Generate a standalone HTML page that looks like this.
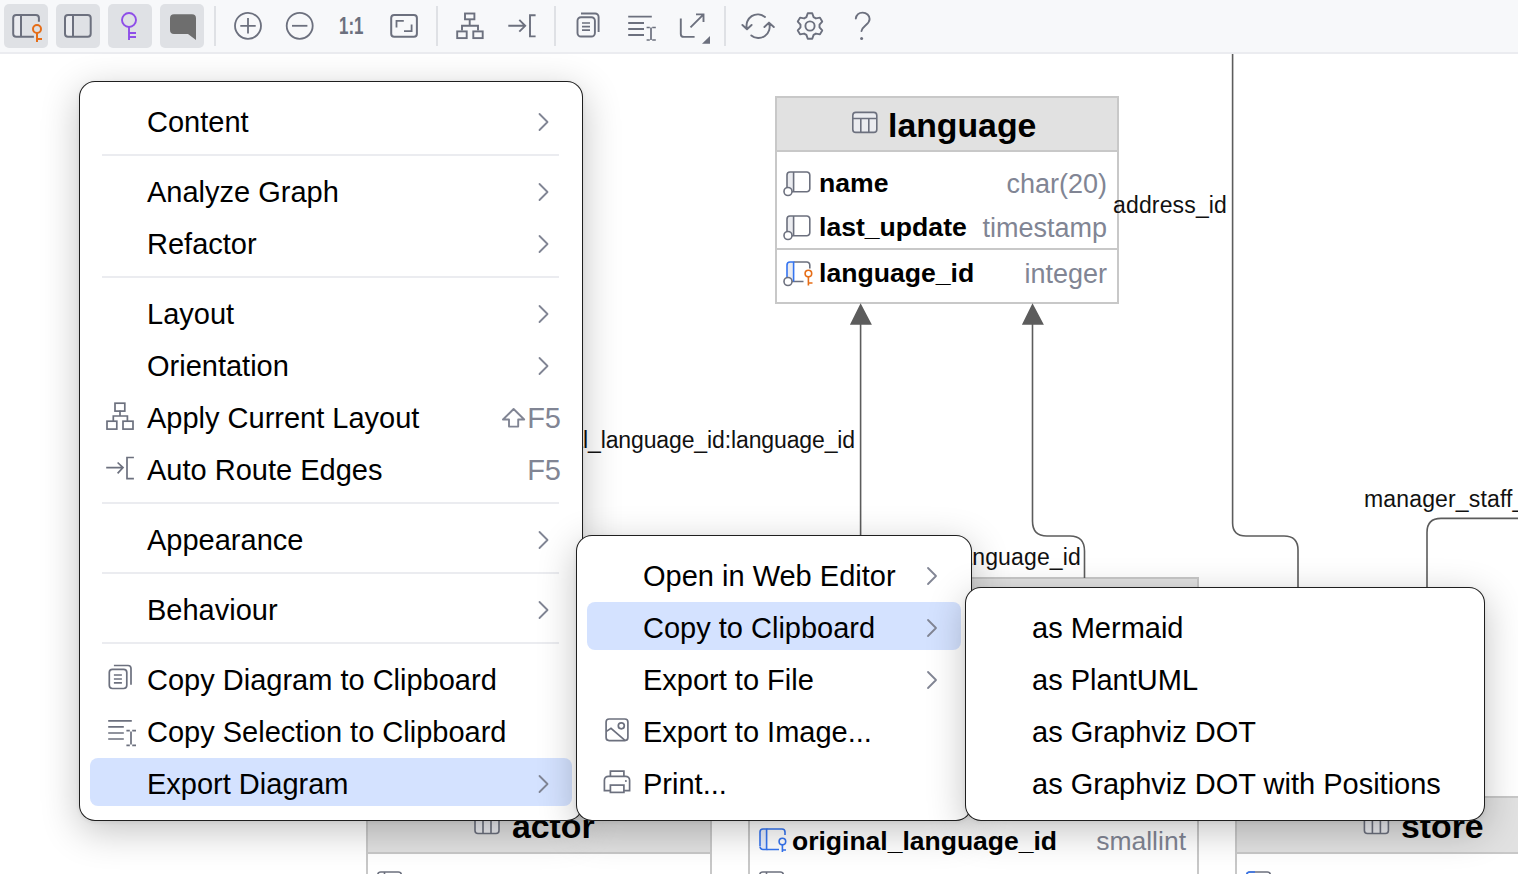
<!DOCTYPE html>
<html><head><meta charset="utf-8">
<style>
html,body{margin:0;padding:0;}
body{width:1518px;height:874px;overflow:hidden;position:relative;background:#fff;font-family:"Liberation Sans",sans-serif;}
.abs{position:absolute;}
#toolbar{position:absolute;left:0;top:0;width:1518px;height:52px;background:#f7f8fa;border-bottom:2px solid #ebecf0;}
svg{position:absolute;left:0;top:0;overflow:visible;}
.lbl{position:absolute;font-size:23px;letter-spacing:0.15px;line-height:0;color:#111;white-space:nowrap;}
.tb{position:absolute;background:#fff;border:2px solid #c8c8c8;box-sizing:border-box;}
.th{position:absolute;background:#e1e1e1;}
.bt{position:absolute;font-weight:bold;color:#000;white-space:nowrap;line-height:0;}
.ty{position:absolute;color:#818594;white-space:nowrap;line-height:0;font-size:27px;text-align:right;}
.menu{position:absolute;background:#fff;border:1px solid rgba(0,0,0,0.88);border-radius:16px;box-shadow:0 10px 38px rgba(0,0,0,0.24),0 1px 4px rgba(0,0,0,0.07);box-sizing:border-box;}
.mi{position:absolute;font-size:29px;line-height:0;color:#000;white-space:nowrap;}
.sc{position:absolute;font-size:29px;line-height:0;color:#818594;white-space:nowrap;}
.sep{position:absolute;height:2px;background:#ebecf0;}
.hl{position:absolute;background:#d4e2ff;border-radius:8px;}
</style></head>
<body>

<!-- ============ TOOLBAR ============ -->
<div id="toolbar"></div>
<svg width="1518" height="54" viewBox="0 0 1518 54" fill="none" stroke="#6c707e" stroke-width="2">
  <rect x="4" y="4" width="44" height="44" rx="5" fill="#dfe1e5" stroke="none"/>
  <rect x="56" y="4" width="44" height="44" rx="5" fill="#dfe1e5" stroke="none"/>
  <rect x="108" y="4" width="44" height="44" rx="5" fill="#dfe1e5" stroke="none"/>
  <rect x="160" y="4" width="44" height="44" rx="5" fill="#dfe1e5" stroke="none"/>
  <!-- icon1 -->
  <rect x="14" y="16" width="7" height="20" fill="#ebecf0" stroke="none"/>
  <path d="M38.9,21.7 V18.1 A3,3 0 0 0 35.9,15.1 H16.2 A3,3 0 0 0 13.2,18.1 V33.7 A3,3 0 0 0 16.2,36.7 H33.9 M21,15.1 V36.7"/>
  <g stroke="#e66d17"><circle cx="37" cy="29" r="4"/><path d="M37,33 V42 M37,39 H42"/></g>
  <!-- icon2 -->
  <rect x="66" y="16" width="7" height="20" fill="#ebecf0" stroke="none"/>
  <rect x="65" y="15.1" width="25.7" height="21.6" rx="3"/>
  <path d="M73,15.1 V36.7"/>
  <!-- icon3 key -->
  <g stroke="#8e4ee8" stroke-width="1.9"><circle cx="129" cy="20" r="7"/><path d="M129,27 V40 M129,33 H136 M129,37 H136"/></g>
  <!-- icon4 bubble -->
  <path d="M174,14.2 H192 A4,4 0 0 1 196,18.2 V40 L188,34 H174 A4,4 0 0 1 170,30 V18.2 A4,4 0 0 1 174,14.2 Z" fill="#6e6e6e" stroke="none"/>
  <!-- separators -->
  <g stroke="#dfe1e5" stroke-width="2"><path d="M215,6 V46 M437,6 V46 M555,6 V46 M725,6 V46"/></g>
  <g stroke-width="1.8">
  <!-- zoom in/out -->
  <circle cx="248" cy="25.8" r="13"/><path d="M240.3,25.8 H255.7 M248,18.1 V33.5"/>
  <circle cx="299.7" cy="25.8" r="13"/><path d="M292,25.8 H307.4"/>
  </g>
  <text x="339" y="34.3" font-family="Liberation Sans" font-weight="bold" font-size="24" fill="#6c707e" stroke="none" textLength="24.5" lengthAdjust="spacingAndGlyphs">1:1</text>
  <!-- fit -->
  <rect x="391.2" y="15.1" width="25.7" height="21.7" rx="3"/>
  <path d="M396.5,27.5 V20.8 H403.8 M411.6,24.6 V31.2 H404" stroke-width="1.8"/>
  <!-- layout -->
  <g stroke-width="1.9">
  <rect x="465" y="13.5" width="9.4" height="5.8"/>
  <rect x="457.2" y="31.4" width="9.5" height="6.7"/>
  <rect x="473.3" y="31.4" width="9.4" height="6.7"/>
  <path d="M469.7,19.4 V25.8 M462,30.4 V25.8 H478 V30.4"/>
  <!-- route -->
  <path d="M508.3,25.8 H524.6 M519.3,19.9 L525.2,25.8 L519.3,31.7 M535.6,15.3 H530 V36.4 H535.6"/>
  </g>
  <!-- copy -->
  <g stroke-width="1.9">
  <rect x="577.5" y="17.2" width="17.4" height="19.3" rx="3.5"/>
  <path d="M581,13.5 H595.1 A3.5,3.5 0 0 1 598.6,17 V32"/>
  <path d="M582,23 H590 M582,26.6 H590 M582,30.2 H590" stroke-width="1.7"/>
  <!-- copy selection -->
  <path d="M628.2,16.6 H651.8 M628.2,23 H644 M628.2,29 H644 M628.2,35 H644" />
  <path d="M651,27.5 V40 M646.6,27.5 H649.8 M652.2,27.5 H655.8 M646.6,40 H649.8 M652.2,40 H655.8" stroke-width="1.7"/>
  <!-- export -->
  <path d="M680.8,18.5 V33.9 A3,3 0 0 0 683.8,36.9 H694.6 M690.5,27.3 L703.5,14.4 M696,14.4 H703.5 V22"/>
  </g>
  <path d="M702,43.7 H710 V36 Z" fill="#6c707e" stroke="none"/>
  <!-- refresh -->
  <g stroke-width="1.9" stroke-linecap="round" stroke-linejoin="round">
  <path d="M765,17 A11.2,11.2 0 0 0 747,28.7 M742.4,25 L747,29.3 L751.6,25"/>
  <path d="M751.3,35.4 A11.2,11.2 0 0 0 769,23 M764.4,27 L769,22.6 L773.8,27"/>
  <!-- gear -->
  <path d="M807.74,13.20L812.26,13.20L813.60,17.10L815.91,18.44L819.96,17.64L822.22,21.55L819.51,24.66L819.51,27.34L822.22,30.45L819.96,34.36L815.91,33.56L813.60,34.90L812.26,38.80L807.74,38.80L806.40,34.90L804.09,33.56L800.04,34.36L797.78,30.45L800.49,27.34L800.49,24.66L797.78,21.55L800.04,17.64L804.09,18.44L806.40,17.10Z"/>
  <circle cx="810" cy="26" r="4.6"/>
  <!-- help -->
  <path d="M855.8,18.5 C856.5,14.5 859.3,12.6 862.6,12.6 C866.6,12.6 869.6,15.5 869.6,19 C869.6,22.2 867.4,23.8 865.4,25.6 C863.3,27.4 861.8,28.6 861.5,31"/>
  </g>
  <circle cx="861.6" cy="38.4" r="1.5" fill="#6c707e" stroke="none"/>
</svg>

<!-- ============ DIAGRAM ============ -->
<!-- language table -->
<div class="tb" style="left:775px;top:96px;width:344px;height:208px;"></div>
<div class="th" style="left:777px;top:98px;width:340px;height:52px;"></div>
<div class="abs" style="left:777px;top:150px;width:340px;height:2px;background:#c8c8c8;"></div>
<div class="abs" style="left:777px;top:248px;width:340px;height:2px;background:#c8c8c8;"></div>
<div class="bt" style="left:888px;top:125px;font-size:33.8px;">language</div>
<div class="bt" style="left:819px;top:183px;font-size:26.6px;">name</div>
<div class="bt" style="left:819px;top:227px;font-size:26.6px;">last_update</div>
<div class="bt" style="left:819px;top:273px;font-size:26.6px;">language_id</div>
<div class="ty" style="right:411px;top:184px;">char(20)</div>
<div class="ty" style="right:411px;top:228px;">timestamp</div>
<div class="ty" style="right:411px;top:274px;">integer</div>

<!-- middle table -->
<div class="tb" style="left:748px;top:577px;width:451px;height:320px;"></div>
<div class="th" style="left:750px;top:579px;width:447px;height:52px;"></div>
<div class="bt" style="left:792px;top:841px;font-size:26.5px;">original_language_id</div>
<div class="ty" style="right:332px;top:841px;font-size:26.5px;">smallint</div>

<!-- actor table -->
<div class="tb" style="left:366px;top:796px;width:346px;height:120px;"></div>
<div class="th" style="left:368px;top:798px;width:342px;height:54px;"></div>
<div class="abs" style="left:368px;top:852px;width:342px;height:2px;background:#c8c8c8;"></div>
<div class="bt" style="left:512px;top:826px;font-size:33.8px;">actor</div>

<!-- store table -->
<div class="tb" style="left:1235px;top:796px;width:346px;height:120px;"></div>
<div class="th" style="left:1237px;top:798px;width:342px;height:54px;"></div>
<div class="abs" style="left:1237px;top:852px;width:342px;height:2px;background:#c8c8c8;"></div>
<div class="bt" style="left:1401px;top:826px;font-size:33.8px;">store</div>

<svg width="1518" height="874" viewBox="0 0 1518 874" fill="none" stroke="#6c707e" stroke-width="1.6">
  <!-- table icons -->
  <g>
    <rect x="852.8" y="112.4" width="24" height="20" rx="3" fill="#ebecf0"/>
    <path d="M852.8,118.5 H876.8 M860.8,118.5 V132.4 M868.8,118.5 V132.4"/>
    <rect x="475" y="813.5" width="24" height="20" rx="3" fill="#ebecf0"/>
    <path d="M475,819.5 H499 M483,819.5 V833.5 M491,819.5 V833.5"/>
    <rect x="1364.4" y="813.5" width="24" height="20" rx="3" fill="#ebecf0"/>
    <path d="M1364.4,819.5 H1388.4 M1372.4,819.5 V833.5 M1380.4,819.5 V833.5"/>
  </g>
  <!-- column icons -->
  <g>
    <rect x="787" y="172" width="6.6" height="19" fill="#ebecf0" stroke="none"/>
    <path d="M787,188 V175 A3,3 0 0 1 790,172 H806.8 A3,3 0 0 1 809.8,175 V188.8 A3,3 0 0 1 806.8,191.8 H792 M793.6,172 V191.8"/>
    <circle cx="788" cy="191.5" r="4" fill="#fff"/>
    <rect x="787" y="216" width="6.6" height="19" fill="#ebecf0" stroke="none"/>
    <path d="M787,232 V219 A3,3 0 0 1 790,216 H806.8 A3,3 0 0 1 809.8,219 V232.8 A3,3 0 0 1 806.8,235.8 H792 M793.6,216 V235.8"/>
    <circle cx="788" cy="235.5" r="4" fill="#fff"/>
    <rect x="787" y="262" width="6.6" height="19" fill="#ebecf0" stroke="none"/>
    <path d="M793.6,262 H806.8 A3,3 0 0 1 809.8,265 V268.5 M803.5,281.5 H792"/>
    <path d="M787,278 V265 A3,3 0 0 1 790,262 H793.6 V281.5" stroke="#3574f0"/>
    <circle cx="788" cy="281.5" r="4" fill="#fff"/>
    <g stroke="#e66d17"><circle cx="808.4" cy="273.6" r="3.3"/><path d="M808.4,277 V285.5 M808.4,283 H812.5"/></g>
    <!-- middle table row -->
    <rect x="760" y="829" width="6.6" height="20" fill="#e8eefc" stroke="none"/>
    <path d="M766.6,829 H782 A3,3 0 0 1 785,832 V835 M779,849.5 H766.6" stroke="#3574f0"/>
    <path d="M760,846 V832 A3,3 0 0 1 763,829 H766.6 V849.5 H763 A3,3 0 0 1 760,846.5" stroke="#3574f0"/>
    <g stroke="#3574f0"><circle cx="782.4" cy="841.6" r="3.3"/><path d="M782.4,845 V852 M782.4,850 H786"/></g>
    <!-- partial row icons at bottom -->
    <rect x="377.8" y="872" width="23.5" height="14" rx="3"/><path d="M384.5,872 V886"/>
    <rect x="759.8" y="872" width="23.5" height="14" rx="3"/><path d="M766.5,872 V886"/>
    <rect x="1246.8" y="872" width="23.5" height="14" rx="3"/>
    <path d="M1246.8,886 V875 A3,3 0 0 1 1249.8,872 H1255" stroke="#3574f0"/>
  </g>
  <!-- edges -->
  <g stroke="#5c5c5c" stroke-width="1.6">
    <path d="M860.6,324 V560"/>
    <path d="M1032.5,324 V521 Q1032.5,536 1047,536 H1070 Q1084.5,536 1084.5,551 V578"/>
    <path d="M1232.6,54 V523 Q1232.6,536 1246,536 H1284 Q1298,536 1298,550 V590"/>
    <path d="M1518,518.4 H1441 Q1427,518.4 1427,532.4 V590"/>
  </g>
  <path d="M860.6,303.3 L849.9,324.8 H871.9 Z M1032.5,303.3 L1021.9,324.8 H1043.9 Z" fill="#5c5c5c" stroke="none"/>
</svg>
<div class="lbl" style="left:1113px;top:205px;">address_id</div>
<div class="lbl" style="right:663px;top:440px;letter-spacing:-0.12px;">original_language_id:language_id</div>
<div class="lbl" style="right:437px;top:557px;">language_id</div>
<div class="lbl" style="left:1364px;top:499px;">manager_staff_id</div>

<!-- ============ MENU 1 ============ -->
<div class="menu" style="left:79px;top:81px;width:504px;height:740px;"></div>
<div class="hl" style="left:90px;top:758px;width:482px;height:48px;"></div>
<div class="sep" style="left:102px;top:154px;width:457px;"></div>
<div class="sep" style="left:102px;top:276px;width:457px;"></div>
<div class="sep" style="left:102px;top:502px;width:457px;"></div>
<div class="sep" style="left:102px;top:572px;width:457px;"></div>
<div class="sep" style="left:102px;top:642px;width:457px;"></div>
<div class="mi" style="left:147px;top:122px;">Content</div>
<div class="mi" style="left:147px;top:192px;">Analyze Graph</div>
<div class="mi" style="left:147px;top:244px;">Refactor</div>
<div class="mi" style="left:147px;top:314px;">Layout</div>
<div class="mi" style="left:147px;top:366px;">Orientation</div>
<div class="mi" style="left:147px;top:418px;">Apply Current Layout</div>
<div class="mi" style="left:147px;top:470px;">Auto Route Edges</div>
<div class="mi" style="left:147px;top:540px;">Appearance</div>
<div class="mi" style="left:147px;top:610px;">Behaviour</div>
<div class="mi" style="left:147px;top:680px;">Copy Diagram to Clipboard</div>
<div class="mi" style="left:147px;top:732px;">Copy Selection to Clipboard</div>
<div class="mi" style="left:147px;top:784px;">Export Diagram</div>
<div class="sc" style="right:957px;top:418px;">F5</div>
<div class="sc" style="right:957px;top:470px;">F5</div>
<svg width="1518" height="874" viewBox="0 0 1518 874" fill="none" stroke="#6c707e" stroke-width="1.7">
  <g stroke="#818594" stroke-width="1.8" stroke-linecap="round" stroke-linejoin="round">
    <path d="M539.5,114 L547.5,122 L539.5,130"/>
    <path d="M539.5,184 L547.5,192 L539.5,200"/>
    <path d="M539.5,236 L547.5,244 L539.5,252"/>
    <path d="M539.5,306 L547.5,314 L539.5,322"/>
    <path d="M539.5,358 L547.5,366 L539.5,374"/>
    <path d="M539.5,532 L547.5,540 L539.5,548"/>
    <path d="M539.5,602 L547.5,610 L539.5,618"/>
    <path d="M539.5,776 L547.5,784 L539.5,792"/>
    <!-- shift glyph -->
    <path d="M513.6,409 L503,419.5 H509 V426.6 H518.2 V419.5 H524.2 Z" stroke-width="1.9"/>
  </g>
  <!-- layout icon -->
  <rect x="115" y="403.2" width="9.8" height="7.9"/>
  <rect x="107" y="421.2" width="9.8" height="7.9"/>
  <rect x="123" y="421.2" width="10" height="7.9"/>
  <path d="M120,410.4 V416 M113.3,421.2 V416 H127.4 V421.2"/>
  <!-- route icon -->
  <path d="M106.2,467.6 H123 M117.6,462.5 L123,467.6 L117.6,473.3 M133.9,457.5 H127 V478.6 H133.9"/>
  <!-- copy icon -->
  <rect x="109.3" y="669.3" width="17.5" height="19.2" rx="3.2"/>
  <path d="M113.9,665.5 H128 A3,3 0 0 1 131,668.5 V684.7"/>
  <path d="M113.9,675 H121.9 M113.9,679 H121.9 M113.9,682.8 H121.9"/>
  <!-- copy selection -->
  <path d="M108.2,720.8 H131.8 M108.2,726.8 H123.8 M108.2,733 H123.8 M108.2,739 H123.8"/>
  <path d="M131,731.5 V744.5 M126.4,730.7 H129.8 M132.2,730.7 H136 M126.4,745.3 H129.8 M132.2,745.3 H136"/>
</svg>

<!-- ============ MENU 2 ============ -->
<div class="menu" style="left:576px;top:535px;width:396px;height:286px;"></div>
<div class="hl" style="left:587px;top:602px;width:374px;height:48px;"></div>
<div class="mi" style="left:643px;top:576px;">Open in Web Editor</div>
<div class="mi" style="left:643px;top:628px;">Copy to Clipboard</div>
<div class="mi" style="left:643px;top:680px;">Export to File</div>
<div class="mi" style="left:643px;top:732px;">Export to Image...</div>
<div class="mi" style="left:643px;top:784px;">Print...</div>
<svg width="1518" height="874" viewBox="0 0 1518 874" fill="none" stroke="#6c707e" stroke-width="1.7">
  <g stroke="#818594" stroke-width="1.8" stroke-linecap="round" stroke-linejoin="round">
    <path d="M928,568 L936,576 L928,584"/>
    <path d="M928,620 L936,628 L928,636"/>
    <path d="M928,672 L936,680 L928,688"/>
  </g>
  <!-- image icon -->
  <rect x="606.1" y="719" width="21.8" height="21.6" rx="3"/>
  <circle cx="621.3" cy="725.8" r="3"/>
  <path d="M606.4,731.4 L611,728.4 L625,740.4"/>
  <!-- printer -->
  <path d="M610.4,776.3 V771.2 H623.9 V776.3"/>
  <path d="M610.4,790.6 H604.4 V780.3 A4,4 0 0 1 608.4,776.3 H625.6 A4,4 0 0 1 629.6,780.3 V790.6 H623.9"/>
  <rect x="610.4" y="785.1" width="13.5" height="7.3"/>
  <circle cx="625.9" cy="780.9" r="1" fill="#6c707e" stroke="none"/>
</svg>

<!-- ============ MENU 3 ============ -->
<div class="menu" style="left:965px;top:587px;width:520px;height:234px;"></div>
<div class="mi" style="left:1032px;top:628px;">as Mermaid</div>
<div class="mi" style="left:1032px;top:680px;">as PlantUML</div>
<div class="mi" style="left:1032px;top:732px;">as Graphviz DOT</div>
<div class="mi" style="left:1032px;top:784px;">as Graphviz DOT with Positions</div>

</body></html>
